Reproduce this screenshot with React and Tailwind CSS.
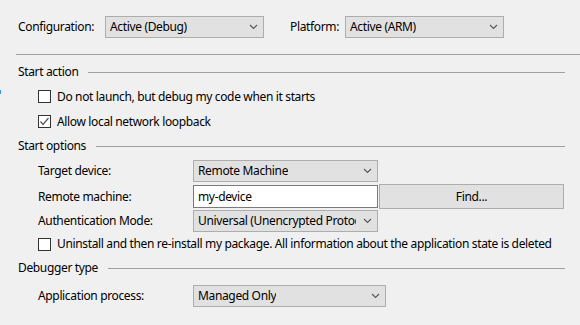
import React from 'react'

const font = { fontFamily: '"Noto Sans", "Segoe UI", sans-serif' }

function Chevron() {
  return (
    <svg width="9" height="6" viewBox="0 0 9 6" className="shrink-0">
      <polyline points="1,1 4.5,4.5 8,1" fill="none" stroke="#555" strokeWidth="1.1" />
    </svg>
  )
}

function Select({ value, className }) {
  return (
    <div
      className={`flex h-[22px] items-center justify-between gap-[7px] border border-[#adadad] bg-[#e1e1e1] pl-[4px] pr-[5px] ${className}`}
    >
      <span className="overflow-hidden whitespace-nowrap">{value}</span>
      <Chevron />
    </div>
  )
}

function Checkbox({ checked, label }) {
  return (
    <div className="flex items-center">
      <div className="flex h-[13px] w-[13px] items-center justify-center border border-[#333] bg-white">
        {checked && (
          <svg width="11" height="11" viewBox="0 0 11 11">
            <polyline points="1.5,5.5 4,8.5 9.5,2" fill="none" stroke="#555" strokeWidth="1.2" />
          </svg>
        )}
      </div>
      <span className="ml-[6px] whitespace-nowrap">{label}</span>
    </div>
  )
}

function Heading({ children }) {
  return (
    <div className="mr-[15px] flex h-[24px] items-center pl-[18px]">
      <span className="whitespace-nowrap">{children}</span>
      <div className="ml-[10px] h-px flex-1 bg-[#a0a0a0]" />
    </div>
  )
}

export default function App() {
  return (
    <div
      className="relative h-[325px] w-[580px] overflow-hidden bg-[#f0f0f0] text-[12px] tracking-[-0.35px] text-black"
      style={font}
    >
      <div className="absolute left-0 top-[90px] h-[4px] w-px bg-[#3399ff]" />

      <div className="flex items-center pl-[18px] pt-[16px]">
        <span className="w-[87px]">Configuration:</span>
        <Select value="Active (Debug)" className="w-[159px]" />
        <span className="ml-[26px] w-[55px]">Platform:</span>
        <Select value="Active (ARM)" className="w-[159px]" />
      </div>

      <div className="ml-[16px] mt-[16px] h-px bg-[#a0a0a0]" />

      <div className="mt-[5px]">
        <Heading>Start action</Heading>
        <div className="flex h-[25px] items-center pl-[38px]">
          <Checkbox label="Do not launch, but debug my code when it starts" />
        </div>
        <div className="flex h-[25px] items-center pl-[38px]">
          <Checkbox checked label="Allow local network loopback" />
        </div>

        <Heading>Start options</Heading>
        <div className="mt-[2px] flex h-[22px] items-center pl-[38px]">
          <span className="w-[155px]">Target device:</span>
          <Select value="Remote Machine" className="w-[185px]" />
        </div>
        <div className="mt-[2px] flex h-[25px] items-center pl-[38px]">
          <span className="w-[155px]">Remote machine:</span>
          <div className="flex h-[23px] w-[185px] items-center border border-[#7a7a7a] bg-white pl-[4px]">my-device</div>
          <button className="ml-px flex h-[25px] w-[185px] items-center justify-center border border-[#adadad] bg-[#e1e1e1]">
            Find...
          </button>
        </div>
        <div className="mt-px flex h-[22px] items-center pl-[38px]">
          <span className="w-[155px]">Authentication Mode:</span>
          <Select value="Universal (Unencrypted Protocol)" className="w-[185px]" />
        </div>
        <div className="flex h-[24px] items-center pl-[38px]">
          <Checkbox label="Uninstall and then re-install my package. All information about the application state is deleted" />
        </div>

        <Heading>Debugger type</Heading>
        <div className="mt-[5px] flex h-[22px] items-center pl-[38px]">
          <span className="w-[155px]">Application process:</span>
          <Select value="Managed Only" className="w-[193px]" />
        </div>
      </div>
    </div>
  )
}
